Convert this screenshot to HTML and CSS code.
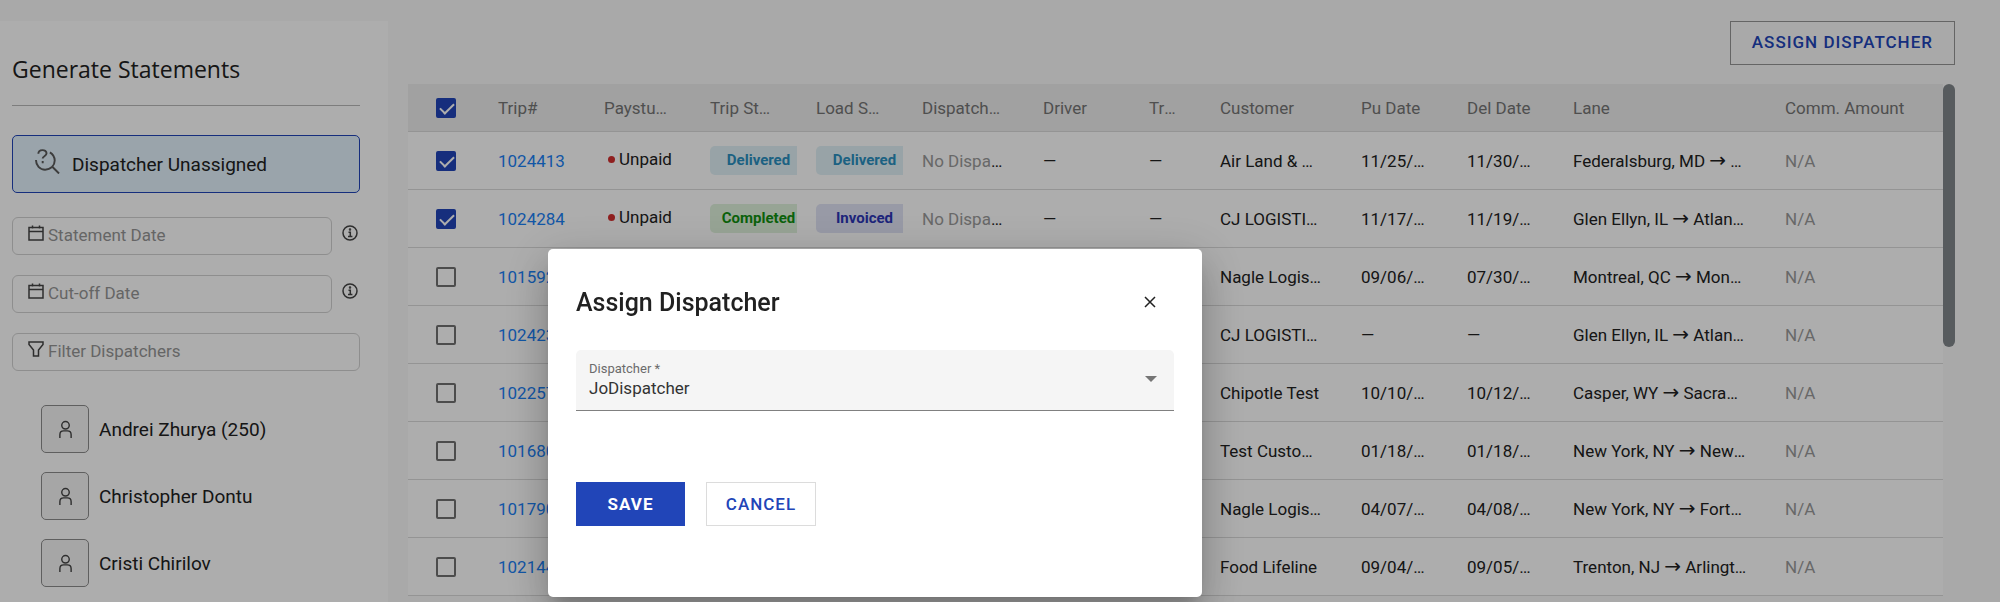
FILE: index.html
```html
<!DOCTYPE html>
<html lang="en">
<head>
    <meta charset="UTF-8">
    <meta name="viewport" content="width=device-width, initial-scale=1.0">
    <title>Generate Statements</title>
    <link rel="stylesheet" href="styles.css">
</head>
<body>
    <svg class="sprite" aria-hidden="true">
        <symbol id="icon-calendar" viewBox="0 0 16 16"><path d="M1 2.5h14v12.5H1zM1 6.5h14M4.5 .5v3M11.5 .5v3" /></symbol>
        <symbol id="icon-info" viewBox="0 0 16 16"><circle cx="8" cy="8" r="7" /><path d="M6.500 7.200h1.800v4M6 11.500h4.400" /><circle cx="8" cy="4.600" r=".5" /></symbol>
        <symbol id="icon-filter" viewBox="0 0 16 16"><path d="M1 1h14v2.500L10.500 9v6h-5V9L1 3.500z" /></symbol>
        <symbol id="icon-person" viewBox="0 0 16 20"><circle cx="8" cy="5.500" r="4" /><path d="M2 19v-3.500c0-2.500 1.500-4 4-4h4c2.500 0 4 1.500 4 4V19" /></symbol>
    </svg>

    <div class="page">
        <aside class="sidebar">
            <h1 class="sidebar-title">Generate Statements</h1>
            <button class="unassigned">
                <svg class="icon-search" viewBox="0 0 26 26"><path d="M3.500 5c0-5 8.500-5 8.500-.5 0 3.300-4 2.800-4 5.500M8 12.500v2.200M1 11.500c0 5.500 4 10 9.500 10 6 0 10-4.500 10-9.500 0-3.500-1.800-6.500-5-8.500M18 18.500l7 7" /></svg>
                Dispatcher Unassigned
            </button>
            <div class="field-row">
                <label class="field">
                    <svg class="icon"><use href="#icon-calendar" /></svg>
                    <input type="text" placeholder="Statement Date" aria-label="Statement Date">
                </label>
                <svg class="icon info"><use href="#icon-info" /></svg>
            </div>
            <div class="field-row">
                <label class="field">
                    <svg class="icon"><use href="#icon-calendar" /></svg>
                    <input type="text" placeholder="Cut-off Date" aria-label="Cut-off Date">
                </label>
                <svg class="icon info"><use href="#icon-info" /></svg>
            </div>
            <div class="field-row">
                <label class="field">
                    <svg class="icon"><use href="#icon-filter" /></svg>
                    <input type="text" placeholder="Filter Dispatchers" aria-label="Filter Dispatchers">
                </label>
            </div>
            <ul class="dispatchers">
                <li><span class="avatar"><svg><use href="#icon-person" /></svg></span>Andrei Zhurya (250)</li>
                <li><span class="avatar"><svg><use href="#icon-person" /></svg></span>Christopher Dontu</li>
                <li><span class="avatar"><svg><use href="#icon-person" /></svg></span>Cristi Chirilov</li>
            </ul>
        </aside>

        <main class="main">
            <div class="toolbar">
                <button class="btn btn-outline">ASSIGN DISPATCHER</button>
            </div>
            <div class="table-wrap">
                <table class="trips">
                    <colgroup>
                        <col class="col-check">
                        <col class="col-md"><col class="col-md"><col class="col-md"><col class="col-md">
                        <col class="col-dispatcher">
                        <col class="col-md">
                        <col class="col-truck">
                        <col class="col-customer">
                        <col class="col-md"><col class="col-md">
                        <col class="col-lane">
                        <col>
                    </colgroup>
                    <thead>
                        <tr>
                            <th class="check"><input type="checkbox" aria-label="Select all" checked></th>
                            <th>Trip#</th>
                            <th>Paystub Status</th>
                            <th>Trip Status</th>
                            <th>Load Status</th>
                            <th>Dispatchers</th>
                            <th>Driver</th>
                            <th>Truck</th>
                            <th>Customer</th>
                            <th>Pu Date</th>
                            <th>Del Date</th>
                            <th>Lane</th>
                            <th>Comm. Amount</th>
                        </tr>
                    </thead>
                    <tbody>
                        <tr>
                            <td class="check"><input type="checkbox" aria-label="Select trip 1024413" checked></td>
                            <td><a href="#">1024413</a></td>
                            <td><span class="unpaid">Unpaid</span></td>
                            <td class="clip"><span class="badge delivered">Delivered</span></td>
                            <td class="clip"><span class="badge delivered">Delivered</span></td>
                            <td><span class="muted">No Dispatcher</span></td>
                            <td>—</td>
                            <td>—</td>
                            <td>Air Land &amp; Water</td>
                            <td>11/25/2022</td>
                            <td>11/30/2022</td>
                            <td>Federalsburg, MD <span class="to">→</span> Dover, DE</td>
                            <td><span class="muted">N/A</span></td>
                        </tr>
                        <tr>
                            <td class="check"><input type="checkbox" aria-label="Select trip 1024284" checked></td>
                            <td><a href="#">1024284</a></td>
                            <td><span class="unpaid">Unpaid</span></td>
                            <td class="clip"><span class="badge completed">Completed</span></td>
                            <td class="clip"><span class="badge invoiced">Invoiced</span></td>
                            <td><span class="muted">No Dispatcher</span></td>
                            <td>—</td>
                            <td>—</td>
                            <td>CJ LOGISTICS</td>
                            <td>11/17/2022</td>
                            <td>11/19/2022</td>
                            <td>Glen Ellyn, IL <span class="to">→</span> Atlanta, GA</td>
                            <td><span class="muted">N/A</span></td>
                        </tr>
                        <tr>
                            <td class="check"><input type="checkbox" aria-label="Select trip"></td>
                            <td><a href="#">101592</a></td>
                            <td></td><td></td><td></td><td></td><td></td><td></td>
                            <td>Nagle Logistics</td>
                            <td>09/06/2022</td>
                            <td>07/30/2022</td>
                            <td>Montreal, QC <span class="to">→</span> Monmouth, NJ</td>
                            <td><span class="muted">N/A</span></td>
                        </tr>
                        <tr>
                            <td class="check"><input type="checkbox" aria-label="Select trip"></td>
                            <td><a href="#">102423</a></td>
                            <td></td><td></td><td></td><td></td><td></td><td></td>
                            <td>CJ LOGISTICS</td>
                            <td>—</td>
                            <td>—</td>
                            <td>Glen Ellyn, IL <span class="to">→</span> Atlanta, GA</td>
                            <td><span class="muted">N/A</span></td>
                        </tr>
                        <tr>
                            <td class="check"><input type="checkbox" aria-label="Select trip"></td>
                            <td><a href="#">102257</a></td>
                            <td></td><td></td><td></td><td></td><td></td><td></td>
                            <td>Chipotle Test</td>
                            <td>10/10/2022</td>
                            <td>10/12/2022</td>
                            <td>Casper, WY <span class="to">→</span> Sacramento, CA</td>
                            <td><span class="muted">N/A</span></td>
                        </tr>
                        <tr>
                            <td class="check"><input type="checkbox" aria-label="Select trip"></td>
                            <td><a href="#">101680</a></td>
                            <td></td><td></td><td></td><td></td><td></td><td></td>
                            <td>Test Customer</td>
                            <td>01/18/2022</td>
                            <td>01/18/2022</td>
                            <td>New York, NY <span class="to">→</span> Newark, NJ</td>
                            <td><span class="muted">N/A</span></td>
                        </tr>
                        <tr>
                            <td class="check"><input type="checkbox" aria-label="Select trip"></td>
                            <td><a href="#">101790</a></td>
                            <td></td><td></td><td></td><td></td><td></td><td></td>
                            <td>Nagle Logistics</td>
                            <td>04/07/2022</td>
                            <td>04/08/2022</td>
                            <td>New York, NY <span class="to">→</span> Fortville, IN</td>
                            <td><span class="muted">N/A</span></td>
                        </tr>
                        <tr>
                            <td class="check"><input type="checkbox" aria-label="Select trip"></td>
                            <td><a href="#">102144</a></td>
                            <td></td><td></td><td></td><td></td><td></td><td></td>
                            <td>Food Lifeline</td>
                            <td>09/04/2022</td>
                            <td>09/05/2022</td>
                            <td>Trenton, NJ <span class="to">→</span> Arlington, TX</td>
                            <td><span class="muted">N/A</span></td>
                        </tr>
                    </tbody>
                </table>
                <div class="scrollbar"></div>
            </div>
        </main>
    </div>

    <div class="overlay">
        <div class="dialog" role="dialog" aria-labelledby="dialog-title">
            <div class="dialog-header">
                <h2 id="dialog-title">Assign Dispatcher</h2>
                <button class="close" aria-label="Close">
                    <svg viewBox="0 0 12 12"><path d="M1 1l10 10M11 1L1 11" /></svg>
                </button>
            </div>
            <div class="select-field">
                <label for="dispatcher">Dispatcher *</label>
                <select id="dispatcher">
                    <option>JoDispatcher</option>
                </select>
                <svg class="arrow" viewBox="0 0 12 6"><path d="M0 0h12L6 6z" /></svg>
            </div>
            <div class="dialog-actions">
                <button class="btn btn-primary">SAVE</button>
                <button class="btn btn-cancel">CANCEL</button>
            </div>
        </div>
    </div>
</body>
</html>
```
FILE: styles.css
```css
* {
    box-sizing: border-box;
}

body {
    margin: 0;
    height: 100vh;
    overflow: hidden;
    background-color: #fafafa;
    font-family: Roboto, "DejaVu Sans", sans-serif;
    font-size: 17px;
    color: #212121;
}

button,
input,
select {
    font-family: inherit;
}

svg {
    fill: none;
    stroke: #444;
    stroke-width: 1.5;
}

.sprite {
    display: none;
}

.page {
    display: flex;
    align-items: stretch;
    gap: 20px;
    min-height: 100vh;
    padding: 21px 45px 0 0;
}

/* Sidebar */
.sidebar {
    flex: 0 0 388px;
    padding: 32px 28px 0 12px;
    background-color: #fff;
}

.sidebar-title {
    margin: 0 0 29px;
    padding-bottom: 20px;
    border-bottom: 1px solid #b8b8b8;
    font-family: "Open Sans", sans-serif;
    font-size: 23px;
    font-weight: 400;
    line-height: 32px;
}

.unassigned {
    display: flex;
    align-items: center;
    gap: 12px;
    width: 100%;
    height: 58px;
    margin-bottom: 24px;
    padding: 0 22px;
    border: 1px solid #2145b8;
    border-radius: 5px;
    background-color: #e3f2fd;
    font-size: 19px;
    color: #212121;
    cursor: pointer;
}

.icon-search {
    width: 25px;
    height: 25px;
    margin-bottom: 6px;
    stroke: #5a5a5a;
    stroke-width: 2;
}

.field-row {
    display: flex;
    margin-bottom: 20px;
}

.field {
    display: flex;
    flex: 1;
    gap: 4px;
    height: 38px;
    padding: 7px 15px 9px;
    border: 1px solid #d2d2d2;
    border-radius: 6px;
}

.field input {
    flex: 1;
    min-width: 0;
    padding: 0;
    border: none;
    outline: none;
    background: none;
    font-size: 17px;
    line-height: 20px;
}

.field input::placeholder {
    color: #969696;
}

.icon {
    width: 16px;
    height: 16px;
}

.info {
    margin: 8px 2px 0 10px;
}

.dispatchers {
    margin: 34px 0 0;
    padding: 0 0 0 29px;
    list-style: none;
    font-size: 19px;
}

.dispatchers li {
    display: flex;
    align-items: center;
    gap: 10px;
    margin-bottom: 19px;
}

.avatar {
    display: flex;
    align-items: center;
    justify-content: center;
    width: 48px;
    height: 48px;
    border: 1px solid #8c8c8c;
    border-radius: 5px;
    background-color: #f5f5f5;
}

.avatar svg {
    width: 15px;
    height: 19px;
}

/* Buttons */
.btn {
    height: 44px;
    border: 1px solid transparent;
    font-size: 17px;
    font-weight: 500;
    letter-spacing: 1px;
    cursor: pointer;
}

.btn-outline {
    padding: 0 21px 2px;
    border-color: #969696;
    background: none;
    color: #2145b8;
}

.btn-primary {
    width: 109px;
    background-color: #2145b8;
    color: #fff;
    font-weight: 700;
}

.btn-cancel {
    width: 110px;
    border-color: #dcdcdc;
    background-color: #fff;
    color: #2145b8;
}

/* Trips table */
.main {
    flex: 1;
    min-width: 0;
}

.toolbar {
    display: flex;
    justify-content: flex-end;
    margin-bottom: 19px;
}

.table-wrap {
    display: flex;
    align-items: flex-start;
}

.trips {
    flex: 1;
    width: 100%;
    min-width: 0;
    border-collapse: separate;
    border-spacing: 0;
    table-layout: fixed;
    background-color: #fff;
}

.col-check {
    width: 80px;
}

.col-md {
    width: 106px;
}

.col-dispatcher {
    width: 121px;
}

.col-truck {
    width: 71px;
}

.col-customer {
    width: 141px;
}

.col-lane {
    width: 212px;
}

.trips th,
.trips td {
    padding: 0 28px 0 10px;
    border-bottom: 1px solid #dadada;
    overflow: hidden;
    line-height: 20px;
    text-align: left;
    text-overflow: ellipsis;
    white-space: nowrap;
}

.trips th {
    height: 48px;
    background-color: #ededed;
    color: #757575;
    font-weight: 400;
}

.trips td {
    height: 58px;
}

.trips .clip {
    padding-right: 9px;
}

.trips a {
    color: #1a80f5;
    text-decoration: none;
}

.trips .check {
    padding: 0 0 0 28px;
}

.check input {
    display: block;
    width: 20px;
    height: 20px;
    margin: 0;
    appearance: none;
    border: 2px solid #707070;
    border-radius: 2px;
}

.check input:checked {
    position: relative;
    border-color: #2145b8;
    background-color: #2145b8;
}

.check input:checked::after {
    content: "";
    position: absolute;
    left: 5px;
    top: 0;
    width: 6px;
    height: 12px;
    border: solid #fff;
    border-width: 0 2px 2px 0;
    transform: rotate(45deg);
}

.muted {
    color: #9a9a9a;
}

.to {
    font-size: 20px;
    line-height: 16px;
}

.unpaid {
    display: flex;
    align-items: center;
    gap: 4px;
    padding: 0 0 4px 4px;
}

.unpaid::before {
    content: "";
    width: 7px;
    height: 7px;
    margin-top: 2px;
    border-radius: 50%;
    background-color: #d32f2f;
}

/* Badges are cut by the column edge when the column is narrow */
.badge {
    display: flex;
    justify-content: center;
    min-width: 97px;
    height: 29px;
    border-radius: 5px;
    clip-path: inset(0 10px 0 0);
    font-size: 15px;
    font-weight: 700;
    line-height: 29px;
}

.delivered {
    background-color: #e1f1f6;
    color: #2a8fc0;
}

.completed {
    background-color: #dff2dc;
    color: #0f9010;
}

.invoiced {
    background-color: #e0e3f5;
    color: #2b35b5;
}

.scrollbar {
    width: 12px;
    height: 263px;
    border-radius: 6px;
    background-color: #80868b;
}

/* Dialog */
.overlay {
    position: fixed;
    inset: 0;
    display: flex;
    align-items: flex-start;
    justify-content: center;
    padding: 249px 250px 0 0;
    background-color: rgba(0, 0, 0, 0.32);
}

.dialog {
    width: 654px;
    padding: 28px 28px 71px;
    border-radius: 5px;
    background-color: #fff;
    box-shadow: 0 11px 15px -7px rgba(0, 0, 0, 0.2), 0 24px 38px 3px rgba(0, 0, 0, 0.14), 0 9px 46px 8px rgba(0, 0, 0, 0.12);
}

.dialog-header {
    display: flex;
    align-items: center;
    justify-content: space-between;
    height: 50px;
    margin-bottom: 23px;
}

.dialog-header h2 {
    margin: 0;
    font-size: 25px;
    font-weight: 500;
}

.close {
    display: flex;
    align-items: center;
    justify-content: center;
    width: 48px;
    height: 48px;
    padding: 0;
    border: none;
    background: none;
    cursor: pointer;
}

.close svg {
    width: 12px;
    height: 12px;
    stroke: #212121;
}

.select-field {
    position: relative;
    height: 61px;
    padding: 11px 13px 0;
    margin-bottom: 71px;
    border-bottom: 1px solid #808080;
    border-radius: 5px 5px 0 0;
    background-color: #f5f5f5;
}

.select-field label {
    display: block;
    font-size: 13px;
    line-height: 16px;
    color: #6b6b6b;
}

.select-field select {
    display: block;
    width: 100%;
    height: 22px;
    padding: 0;
    border: none;
    appearance: none;
    background: none;
    font-size: 17px;
    color: #333;
}

.arrow {
    position: absolute;
    top: 26px;
    right: 17px;
    width: 12px;
    height: 6px;
    fill: #757575;
    stroke: none;
    pointer-events: none;
}

.dialog-actions {
    display: flex;
    gap: 21px;
}
```
